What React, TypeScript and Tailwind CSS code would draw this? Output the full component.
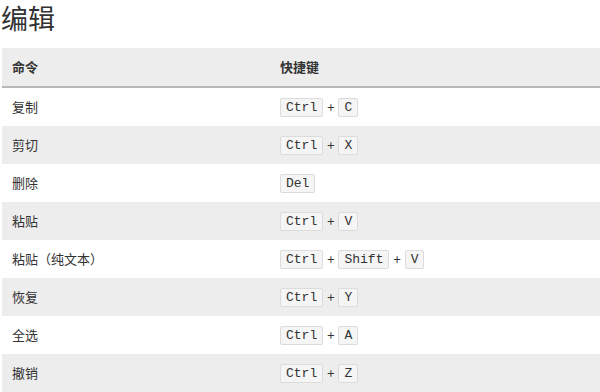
const rows: { cmd: string; keys: string[] }[] = [
  { cmd: '复制', keys: ['Ctrl', 'C'] },
  { cmd: '剪切', keys: ['Ctrl', 'X'] },
  { cmd: '删除', keys: ['Del'] },
  { cmd: '粘贴', keys: ['Ctrl', 'V'] },
  { cmd: '粘贴（纯文本）', keys: ['Ctrl', 'Shift', 'V'] },
  { cmd: '恢复', keys: ['Ctrl', 'Y'] },
  { cmd: '全选', keys: ['Ctrl', 'A'] },
  { cmd: '撤销', keys: ['Ctrl', 'Z'] },
];

function Kbd({ k }: { k: string }) {
  return (
    <kbd className="inline-block h-[19px] px-[5px] rounded-[2px] border border-[#dcdcdc] bg-[#f5f5f5] text-[13px] leading-[17px] text-[#333] font-['Liberation_Mono',monospace]">
      {k}
    </kbd>
  );
}

export default function App() {
  return (
    <div className="w-[600px] h-[392px] overflow-hidden bg-white text-[#333] font-['Noto_Sans_CJK_SC','Noto_Sans',sans-serif]">
      <div className="h-[48px]">
        <h1 className="pl-[1px] text-[27px] leading-[36px] font-normal text-[#333]">编辑</h1>
      </div>
      <div className="ml-[2px]">
        <div className="flex h-[40px] bg-[#ededed] border-b-2 border-[#b8b8b8] text-[13px] font-bold">
          <div className="w-[266px] pl-[10px] flex items-center">命令</div>
          <div className="flex-1 pl-[12px] flex items-center">快捷键</div>
        </div>
        {rows.map((r, i) => (
          <div key={r.cmd} className={`flex h-[38px] text-[13px] ${i % 2 === 1 ? 'bg-[#ededed]' : 'bg-white'}`}>
            <div className="w-[266px] pl-[10px] flex items-center">{r.cmd}</div>
            <div className="flex-1 pl-[12px] flex items-center gap-[4px]">
              {r.keys.map((k, j) => (
                <span key={k} className="flex items-center gap-[4px]">
                  {j > 0 && <span className="text-[13px]">+</span>}
                  <Kbd k={k} />
                </span>
              ))}
            </div>
          </div>
        ))}
      </div>
    </div>
  );
}
